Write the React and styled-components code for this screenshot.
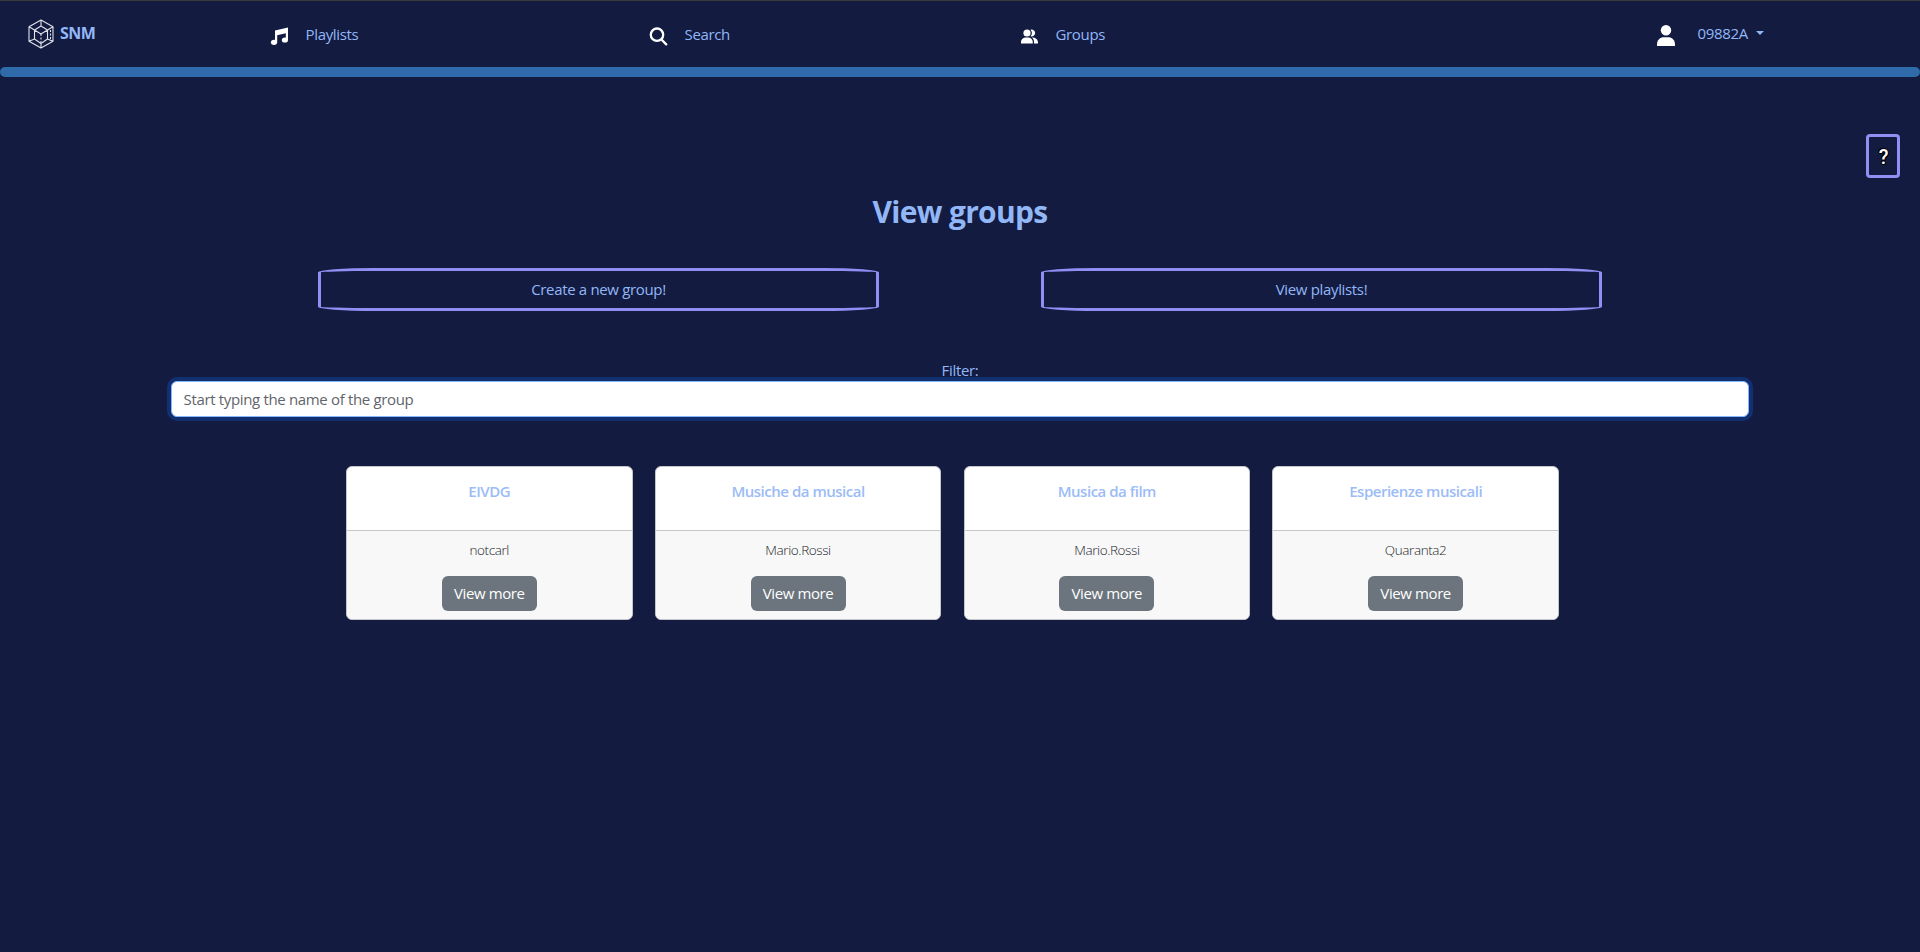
import React from "react";
import styled, { createGlobalStyle } from "styled-components";

const Global = createGlobalStyle`
  *, *::before, *::after { box-sizing: border-box; }
  body { margin: 0; background: #131b40; color: #92b7f7; font: 15px/24px "Open Sans", "Noto Sans", sans-serif; letter-spacing: -0.34px; overflow: hidden; }
  button, input { font: inherit; letter-spacing: inherit; }
`;
const Page = styled.div`
  min-height: 952px;
  border-top: 1px solid #3a3a3a;
`;
const Nav = styled.nav`
  height: 66px;
  display: grid;
  grid-template-columns: 270px 379px 371px 636px 1fr;
`;
const Brand = styled.a`
  display: flex;
  padding: 18px 0 0 28px;
  gap: 6px;
  font-size: 16px;
  font-weight: 700;
  letter-spacing: -0.5px;
  svg { width: 26px; height: 30px; }
  span { margin-top: 2px; }
`;
const NavItem = styled.a`
  display: flex;
  align-items: flex-start;
  padding-top: 21px;
  gap: 16.5px;
  color: inherit;
  svg { width: 19px; height: 19px; color: #fff; margin-top: 5px; }
`;
const UserMenu = styled(NavItem)`
  padding-top: 20px;
  gap: 21.5px;
  svg { width: 20px; height: 23px; margin-top: 3px; }
`;
const Caret = styled.span`
  border: 4.5px solid transparent;
  border-top-color: currentColor;
  border-bottom: 0;
  margin: 10px 0 0 -13px;
`;
const Bar = styled.div`
  height: 10px;
  border-radius: 5px;
  background: #2f6aaa;
`;
const HelpRow = styled.div`
  display: flex;
  justify-content: flex-end;
  padding: 57px 20px 0 0;
`;
const Help = styled.button`
  width: 34px;
  height: 44px;
  padding: 2px 0 0 1px;
  border: 3px solid #918ef4;
  border-radius: 4px;
  background: transparent;
  color: #fff;
  font-family: Roboto, sans-serif;
  font-weight: 500;
  font-size: 20px;
  text-shadow: 1px 0 #000, -1px 0 #000, 0 1px #000, 0 -1px #000, 1px 1px #000, -1px -1px #000;
`;
const Title = styled.h1`
  margin: 15px 0 0;
  text-align: center;
  font-size: 30px;
  line-height: 38px;
  font-weight: 700;
  letter-spacing: -0.7px;
`;
const Actions = styled.div`
  display: flex;
  justify-content: center;
  gap: 162px;
  margin-top: 37px;
`;
const Action = styled.button`
  width: 561px;
  height: 43px;
  padding: 0 6px 2px;
  border: 3px solid #918ef4;
  border-radius: 10%;
  background: transparent;
  color: inherit;
`;
const Filter = styled.label`
  display: flex;
  flex-direction: column;
  align-items: center;
  width: 1578px;
  margin: 47px auto 0;
`;
const Input = styled.input`
  width: 100%;
  height: 36px;
  margin-top: -1px;
  padding: 0 12px 1px 11.5px;
  border: 1px solid #86b7fe;
  border-radius: 6px;
  outline: 0;
  box-shadow: 0 0 0 4px #122f70;
  color: #212529;
  &::placeholder { color: #5f656b; opacity: 1; }
`;
const Cards = styled.div`
  display: grid;
  grid-template-columns: repeat(4, 286.5px);
  column-gap: 22.3px;
  margin: 49px 0 0 346px;
`;
const Card = styled.article`
  height: 154px;
  border: 1px solid #c5c6ca;
  border-radius: 6px;
  overflow: hidden;
  background: #fff;
  text-align: center;
`;
const CardTitle = styled.h2`
  height: 64px;
  margin: 0;
  padding-top: 12px;
  font-size: 15px;
  line-height: 24px;
  font-weight: 600;
  letter-spacing: -0.48px;
  color: #9bbcf6;
  border-bottom: 1px solid #c8c8c8;
`;
const CardBody = styled.div`
  height: 88px;
  background: #f8f8f8;
  padding-top: 9px;
`;
const Owner = styled.div`
  font-size: 13.5px;
  line-height: 21px;
  letter-spacing: -0.4px;
  font-weight: 300;
  color: #212529;
  margin-bottom: 15px;
`;
const More = styled.button`
  height: 35px;
  width: 95px;
  padding: 0 0 2px;
  border: 0;
  border-radius: 6px;
  background: #6c757d;
  color: #fff;
  letter-spacing: -0.4px;
`;

const Logo = () => (
  <svg viewBox="0 0 26 30" fill="none" stroke="#dfe2ea" strokeWidth="1.1" strokeLinejoin="round">
    <path d="M13 1 25 7.8V22.2L13 29 1 22.2V7.8ZM13 7 19.5 11V20L13 24.500 6.500 20V11ZM6.500 11 13 15 19.500 11M13 1V7M1 7.800 6.500 11M25 7.800 19.500 11M1 22.200 6.500 20M25 22.200 19.500 20M13 24.500V29" />
    <path d="M13 15V24M22.500 11V22" strokeDasharray="2 1.500" />
  </svg>
);
const MusicIcon = () => (
  <svg viewBox="0 0 19 19" fill="currentColor">
    <ellipse cx="4" cy="15.300" rx="3.100" ry="2.600" />
    <ellipse cx="14.900" cy="13" rx="3.100" ry="2.600" />
    <path d="M5 3.600 18 .5V13h-2.200V6.300L7.200 8.300v7H5z" />
  </svg>
);
const SearchIcon = () => (
  <svg viewBox="0 0 19 19" fill="none" stroke="currentColor" strokeWidth="2.300" strokeLinecap="round">
    <circle cx="8" cy="7.700" r="6.200" />
    <path d="m12.500 12.500 4.700 4.900" />
  </svg>
);
const PeopleIcon = () => (
  <svg viewBox="0 0 19 19" fill="currentColor">
    <circle cx="7" cy="6" r="3.600" />
    <path d="M10.500 2.700a3.500 3.500 0 1 1 0 6.600 5 5 0 0 0 0-6.600zM1 16.500v-1.200c0-3 2.300-4.800 5-4.800h2c2.700 0 4.800 1.800 4.800 4.800v1.200zM12 10.500c3.500 0 6 2 6 5v1h-4v-1.200c0-2-.7-3.700-2-4.800z" />
  </svg>
);
const PersonIcon = () => (
  <svg viewBox="0 0 20 23" fill="currentColor">
    <circle cx="10" cy="6.200" r="5.200" />
    <path d="M1 22v-1.500C1 16 4 13.300 8 13.300h4c4 0 7 2.700 7 7.200V22z" />
  </svg>
);

const groups = [
  ["EIVDG", "notcarl"],
  ["Musiche da musical", "Mario.Rossi"],
  ["Musica da film", "Mario.Rossi"],
  ["Esperienze musicali", "Quaranta2"],
];

export default function App() {
  return (
    <Page>
      <Global />
      <Nav>
        <Brand><Logo /><span>SNM</span></Brand>
        <NavItem><MusicIcon />Playlists</NavItem>
        <NavItem><SearchIcon />Search</NavItem>
        <NavItem><PeopleIcon />Groups</NavItem>
        <UserMenu><PersonIcon />09882A<Caret /></UserMenu>
      </Nav>
      <Bar />
      <HelpRow><Help>?</Help></HelpRow>
      <Title>View groups</Title>
      <Actions>
        <Action>Create a new group!</Action>
        <Action>View playlists!</Action>
      </Actions>
      <Filter>
        Filter:
        <Input placeholder="Start typing the name of the group" />
      </Filter>
      <Cards>
        {groups.map(([name, owner]) => (
          <Card key={name}>
            <CardTitle>{name}</CardTitle>
            <CardBody>
              <Owner>{owner}</Owner>
              <More>View more</More>
            </CardBody>
          </Card>
        ))}
      </Cards>
    </Page>
  );
}
